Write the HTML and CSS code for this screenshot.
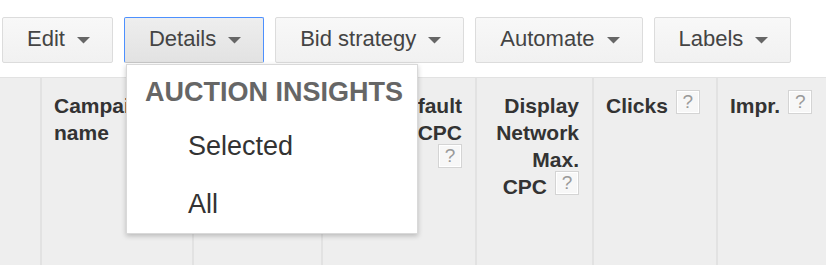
FILE: index.html
```html
<!DOCTYPE html>
<html>
<head>
<meta charset="utf-8">
<link rel="stylesheet" href="styles.css">
</head>
<body>
<div class="page">
  <div class="toolbar">
    <div class="btn">Edit<svg class="caret" viewBox="0 0 13 7"><path d="M0 0H13L6.5 6.5Z"/></svg></div>
    <div class="btn btn-active">Details<svg class="caret" viewBox="0 0 13 7"><path d="M0 0H13L6.5 6.5Z"/></svg></div>
    <div class="btn">Bid strategy<svg class="caret" viewBox="0 0 13 7"><path d="M0 0H13L6.5 6.5Z"/></svg></div>
    <div class="btn">Automate<svg class="caret" viewBox="0 0 13 7"><path d="M0 0H13L6.5 6.5Z"/></svg></div>
    <div class="btn">Labels<svg class="caret" viewBox="0 0 13 7"><path d="M0 0H13L6.5 6.5Z"/></svg></div>
  </div>
  <div class="table-head">
    <div class="cell cell-check"></div>
    <div class="cell">Campaign<br>name</div>
    <div class="cell"></div>
    <div class="cell cell-right">Default<br>Max. CPC<br><span class="help">?</span></div>
    <div class="cell cell-right">Display<br>Network<br>Max.<br>CPC<span class="help">?</span></div>
    <div class="cell">Clicks<span class="help">?</span></div>
    <div class="cell">Impr.<span class="help">?</span></div>
  </div>
  <div class="menu">
    <div class="menu-title">AUCTION INSIGHTS</div>
    <ul class="menu-list">
      <li class="menu-item">Selected</li>
      <li class="menu-item">All</li>
    </ul>
  </div>
</div>
</body>
</html>
```
FILE: styles.css
```css
html, body {
  margin: 0;
  padding: 0;
  background: #ffffff;
  overflow: hidden;
}
.page {
  position: relative;
  width: 826px;
  height: 265px;
  display: flex;
  flex-direction: column;
  font-family: "Liberation Sans", Arial, sans-serif;
}
.toolbar {
  display: flex;
  gap: 11px;
  padding: 17px 0 0 2px;
  height: 46px;
}
.btn {
  box-sizing: border-box;
  height: 46px;
  display: flex;
  align-items: center;
  padding: 0 22px 3px 24px;
  border: 1px solid #dcdcdc;
  border-radius: 2px;
  background: linear-gradient(#f8f8f8, #f1f1f1);
  color: #444444;
  font-size: 22px;
  white-space: nowrap;
}
.btn-active {
  border-color: #4d90fe;
  border-bottom-color: #c8c8c8;
  background: linear-gradient(#eeeeee, #e2e2e2);
}
.caret {
  width: 13px;
  height: 7px;
  margin-left: 12px;
  margin-top: 3px;
  fill: #666666;
}
.table-head {
  flex: 1;
  margin-top: 14px;
  border-top: 1px solid #e2e2e2;
  background: #eeeeee;
  display: grid;
  grid-template-columns: 40px 152px 129px 154px 117px 124px 1fr;
}
.cell {
  box-sizing: border-box;
  border-left: 2px solid #e2e2e2;
  padding: 14px 13px 0 12px;
  font-size: 21px;
  font-weight: bold;
  line-height: 27px;
  color: #333333;
}
.cell-check {
  border-left: none;
}
.cell-right {
  text-align: right;
}
.help {
  display: inline-block;
  box-sizing: border-box;
  width: 24px;
  height: 24px;
  margin-left: 8px;
  margin-top: -2px;
  vertical-align: top;
  border: 1px solid #d4d4d4;
  background: #f7f7f7;
  box-shadow: inset 0 0 0 1px #ffffff;
  color: #9a9a9a;
  font-size: 19px;
  font-weight: normal;
  line-height: 22px;
  text-align: center;
}
.menu {
  position: absolute;
  left: 126px;
  top: 64px;
  box-sizing: border-box;
  width: 292px;
  background: #ffffff;
  border: 1px solid rgba(0, 0, 0, 0.15);
  box-shadow: 0 2px 5px rgba(0, 0, 0, 0.22);
  padding-top: 12px;
}
.menu-title {
  padding-left: 18px;
  font-size: 27px;
  font-weight: bold;
  line-height: 30px;
  color: #666666;
  white-space: nowrap;
}
.menu-list {
  list-style: none;
  margin: 0;
  padding: 10px 0 0 0;
}
.menu-item {
  padding-left: 61px;
  font-size: 27px;
  line-height: 58px;
  color: #333333;
}
```
